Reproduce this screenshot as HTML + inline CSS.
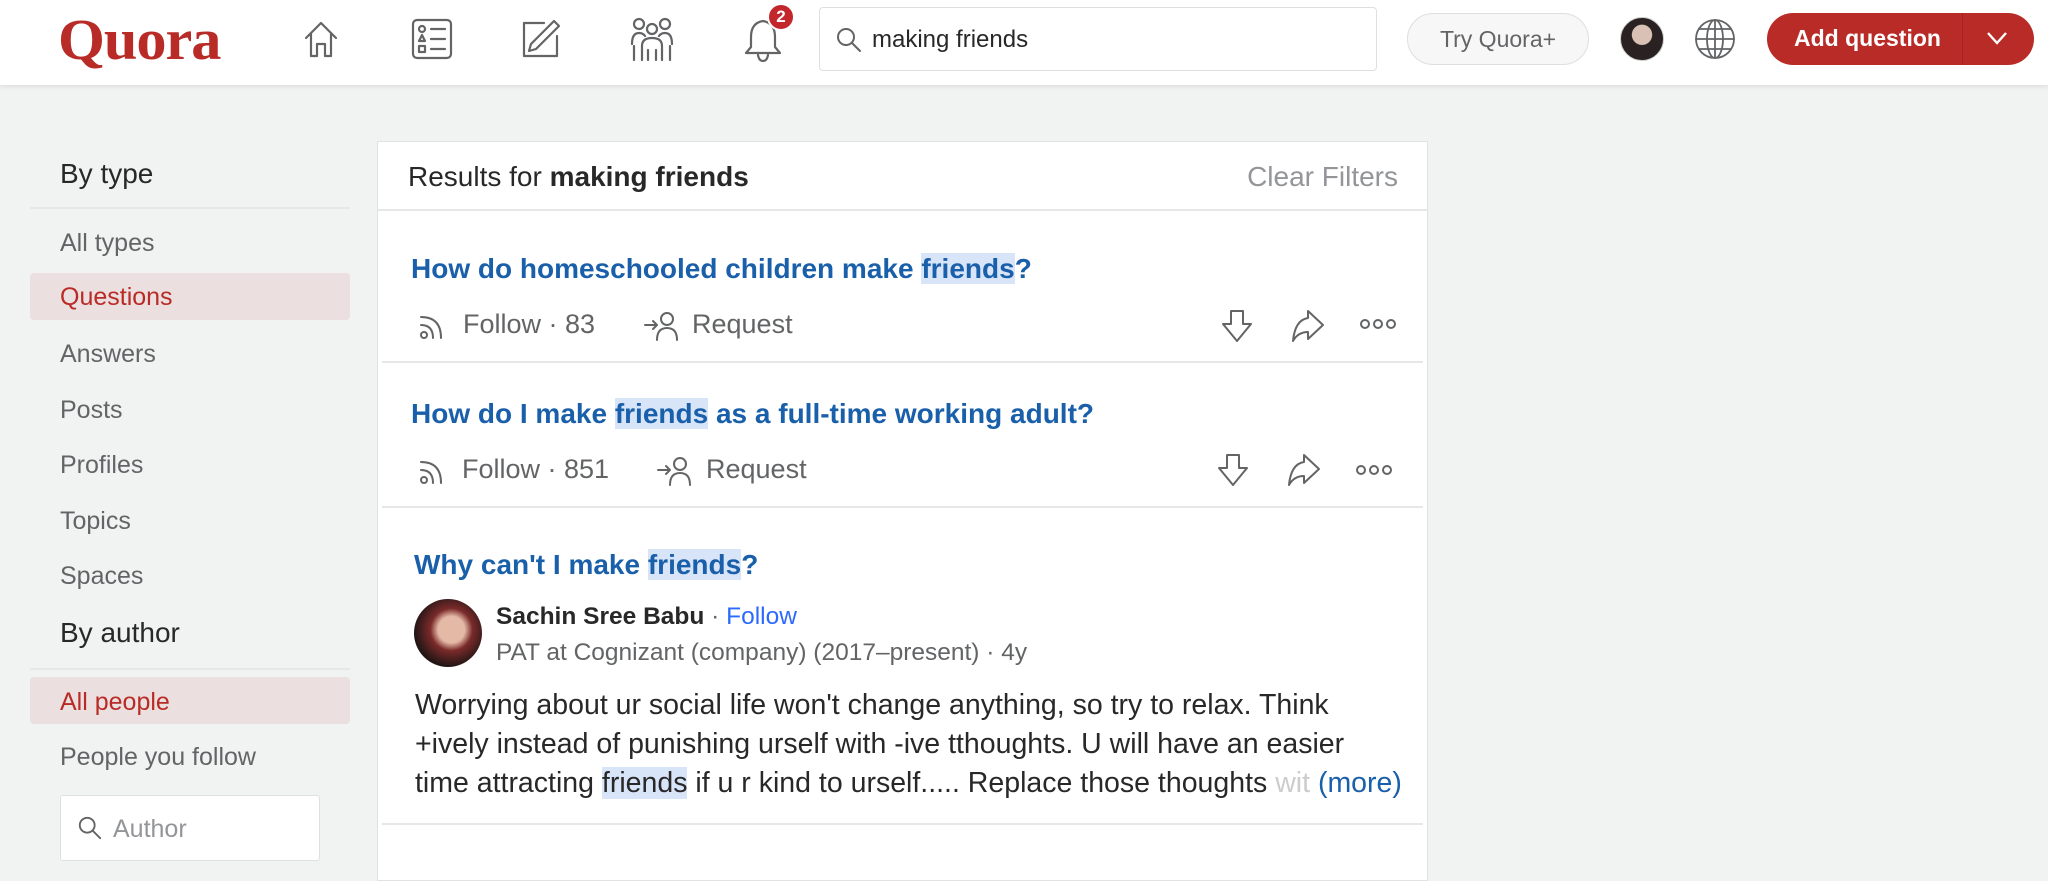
<!DOCTYPE html>
<html><head><meta charset="utf-8"><style>
*{margin:0;padding:0;box-sizing:border-box}
body{width:2048px;height:869px;overflow:hidden;background:#f1f2f2;font-family:"Liberation Sans",sans-serif;position:relative;color:#282829}
.a{position:absolute}
.hdr{left:0;top:0;width:2048px;height:85px;background:#fff;box-shadow:0 2px 4px rgba(0,0,0,.08)}
.logo{left:58px;top:6px;font-family:"Liberation Serif",serif;font-weight:bold;font-size:58px;color:#b92b27;letter-spacing:-1px;transform:scaleX(1.04);transform-origin:left}
.ic{stroke:#636466;fill:none;stroke-width:2.2;stroke-linecap:round;stroke-linejoin:round}
.side{font-size:25px;color:#636466}
.hl{background:#ebdfdf;border-radius:4px}
.card{left:377px;top:141px;width:1051px;height:740px;background:#fff;border:1px solid #e1e2e3}
.qt{font-size:28px;font-weight:bold;color:#195faa}
.mk{background:#d8e4f8}
.meta{font-size:27px;color:#636466}
.div{height:2px;background:#e6e7e8}
</style></head><body>
<div class="a hdr"></div>
<div class="a logo">Quora</div>
<svg class="a ic" style="left:300px;top:18px" width="42" height="42" viewBox="0 0 42 42"><path d="M6 20 L21 5 L36 20 M11 16 V38 H17 V26 H25 V38 H31 V16"/></svg>
<svg class="a ic" style="left:410px;top:17px" width="44" height="44" viewBox="0 0 44 44"><rect x="3" y="3" width="38" height="38" rx="4"/><circle cx="12" cy="12" r="3"/><path d="M12 18 L15 24 H9 Z"/><rect x="9" y="29" width="6" height="6"/><path d="M21 12H35M21 22H35M21 32H35"/></svg>
<svg class="a ic" style="left:520px;top:18px" width="42" height="42" viewBox="0 0 42 42"><path d="M24 5 H4 V38 H37 V18"/><path d="M34 3 L39 8 L16 31 L9 33 L11 26 Z"/></svg>
<svg class="a ic" style="left:630px;top:16px" width="44" height="46" viewBox="0 0 44 46"><circle cx="9" cy="8" r="5"/><circle cx="22" cy="13" r="5"/><circle cx="35" cy="8" r="5"/><path d="M2 28 Q2 17 9 17 Q13 17 15 20 M42 28 Q42 17 35 17 Q31 17 29 20 M12 44 V30 Q12 22 22 22 Q32 22 32 30 V44 M4 44 V30 M40 44 V30 M18 44 V34 M26 44 V34"/></svg>
<svg class="a ic" style="left:742px;top:17px" width="42" height="46" viewBox="0 0 42 46"><path d="M21 4 Q9 6 9 20 V30 L4 36 H38 L33 30 V20 Q33 6 21 4 Z M16 38 Q17 44 21 44 Q25 44 26 38"/></svg>
<div class="a" style="left:767px;top:3px;width:28px;height:28px;border-radius:50%;background:#c3272b;border:2px solid #fff;color:#fff;font-size:17px;font-weight:bold;text-align:center;line-height:24px">2</div>
<div class="a" style="left:819px;top:7px;width:558px;height:64px;border:1px solid #dedfe0;border-radius:4px;background:#fff"></div>
<svg class="a ic" style="left:835px;top:26px;stroke-width:2" width="28" height="28" viewBox="0 0 28 28"><circle cx="11" cy="11" r="8"/><path d="M17 17 L25 25"/></svg>
<div class="a" style="left:872px;top:26px;font-size:24px;color:#282829">making friends</div>
<div class="a" style="left:1407px;top:13px;width:182px;height:52px;border:1px solid #dedfe0;border-radius:26px;background:#f7f7f8;font-size:23px;color:#636466;text-align:center;line-height:50px">Try Quora+</div>
<div class="a" style="left:1620px;top:17px;width:44px;height:44px;border-radius:50%;background:radial-gradient(circle at 50% 40%,#d9c2b5 0 30%,#2a2222 32%);border:1px solid #ccc"></div>
<svg class="a ic" style="left:1693px;top:17px;stroke-width:1.8" width="44" height="44" viewBox="0 0 44 44"><circle cx="22" cy="22" r="19"/><ellipse cx="22" cy="22" rx="8" ry="19"/><path d="M3 22H41M6 12H38M6 32H38M22 3V41"/></svg>
<div class="a" style="left:1767px;top:13px;width:267px;height:52px;border-radius:26px;background:#b92b27"></div>
<div class="a" style="left:1794px;top:25px;font-size:23px;font-weight:bold;color:#fff">Add question</div>
<div class="a" style="left:1962px;top:13px;width:1px;height:52px;background:#a02420"></div>
<svg class="a" style="left:1986px;top:30px" width="22" height="16" viewBox="0 0 22 16"><path d="M2 3 L11 13 L20 3" stroke="#fff" stroke-width="2.4" fill="none"/></svg>

<div class="a" style="left:60px;top:158px;font-size:28px;color:#282829">By type</div>
<div class="a div" style="left:30px;top:207px;width:320px"></div>
<div class="a side" style="left:60px;top:229px">All types</div>
<div class="a hl" style="left:30px;top:273px;width:320px;height:47px"></div>
<div class="a side" style="left:60px;top:283px;color:#b92b27">Questions</div>
<div class="a side" style="left:60px;top:340px">Answers</div>
<div class="a side" style="left:60px;top:396px">Posts</div>
<div class="a side" style="left:60px;top:451px">Profiles</div>
<div class="a side" style="left:60px;top:507px">Topics</div>
<div class="a side" style="left:60px;top:562px">Spaces</div>
<div class="a" style="left:60px;top:617px;font-size:28px;color:#282829">By author</div>
<div class="a div" style="left:30px;top:668px;width:320px"></div>
<div class="a hl" style="left:30px;top:677px;width:320px;height:47px"></div>
<div class="a side" style="left:60px;top:688px;color:#b92b27">All people</div>
<div class="a side" style="left:60px;top:743px">People you follow</div>
<div class="a" style="left:60px;top:795px;width:260px;height:66px;border:1px solid #dedfe0;border-radius:3px;background:#fff"></div>
<svg class="a ic" style="left:77px;top:815px;stroke-width:2" width="26" height="26" viewBox="0 0 28 28"><circle cx="11" cy="11" r="8"/><path d="M17 17 L25 25"/></svg>
<div class="a side" style="left:113px;top:815px;color:#939598">Author</div>

<div class="a card"></div>
<div class="a" style="left:408px;top:161px;font-size:28px;color:#282829">Results for <b>making friends</b></div>
<div class="a" style="right:650px;top:161px;font-size:28px;color:#939598">Clear Filters</div>
<div class="a div" style="left:378px;top:209px;width:1049px"></div>

<div class="a qt" style="left:411px;top:253px">How do homeschooled children make <span class="mk">friends</span>?</div>
<svg class="a ic" style="left:417px;top:311px;stroke-width:2" width="30" height="30" viewBox="0 0 30 30"><circle cx="7" cy="24" r="3"/><path d="M4 14 Q16 14 16 27 M4 6 Q24 6 24 27"/></svg>
<div class="a meta" style="left:463px;top:309px">Follow · 83</div>
<svg class="a ic" style="left:643px;top:309px;stroke-width:2" width="36" height="32" viewBox="0 0 36 32"><path d="M2 16H14M10 12L14 16L10 20"/><circle cx="24" cy="10" r="6"/><path d="M14 31 Q14 19 24 19 Q34 19 34 31"/></svg>
<div class="a meta" style="left:692px;top:309px">Request</div>
<svg class="a ic" style="left:1220px;top:308px;stroke-width:2" width="34" height="36" viewBox="0 0 34 36"><path d="M11 3H23V16H31L17 33L3 16H11Z"/></svg>
<svg class="a ic" style="left:1290px;top:308px;stroke-width:2" width="36" height="36" viewBox="0 0 36 36"><path d="M18 3 L33 17 L18 31 V24 Q8 24 3 33 Q5 12 18 10 Z"/></svg>
<svg class="a ic" style="left:1359px;top:316px;stroke-width:2" width="38" height="16" viewBox="0 0 38 16"><circle cx="6" cy="8" r="4"/><circle cx="19" cy="8" r="4"/><circle cx="32" cy="8" r="4"/></svg>
<div class="a div" style="left:382px;top:361px;width:1041px"></div>

<div class="a qt" style="left:411px;top:398px">How do I make <span class="mk">friends</span> as a full-time working adult?</div>
<svg class="a ic" style="left:417px;top:456px;stroke-width:2" width="30" height="30" viewBox="0 0 30 30"><circle cx="7" cy="24" r="3"/><path d="M4 14 Q16 14 16 27 M4 6 Q24 6 24 27"/></svg>
<div class="a meta" style="left:462px;top:454px">Follow · 851</div>
<svg class="a ic" style="left:656px;top:454px;stroke-width:2" width="36" height="32" viewBox="0 0 36 32"><path d="M2 16H14M10 12L14 16L10 20"/><circle cx="24" cy="10" r="6"/><path d="M14 31 Q14 19 24 19 Q34 19 34 31"/></svg>
<div class="a meta" style="left:706px;top:454px">Request</div>
<svg class="a ic" style="left:1216px;top:452px;stroke-width:2" width="34" height="36" viewBox="0 0 34 36"><path d="M11 3H23V16H31L17 33L3 16H11Z"/></svg>
<svg class="a ic" style="left:1286px;top:452px;stroke-width:2" width="36" height="36" viewBox="0 0 36 36"><path d="M18 3 L33 17 L18 31 V24 Q8 24 3 33 Q5 12 18 10 Z"/></svg>
<svg class="a ic" style="left:1355px;top:462px;stroke-width:2" width="38" height="16" viewBox="0 0 38 16"><circle cx="6" cy="8" r="4"/><circle cx="19" cy="8" r="4"/><circle cx="32" cy="8" r="4"/></svg>
<div class="a div" style="left:382px;top:506px;width:1041px"></div>

<div class="a qt" style="left:414px;top:549px">Why can't I make <span class="mk">friends</span>?</div>
<div class="a" style="left:414px;top:599px;width:68px;height:68px;border-radius:50%;background:radial-gradient(circle at 55% 45%,#e4b9a6 0 25%,#7a2a2a 40%,#221515 70%)"></div>
<div class="a" style="left:496px;top:603px;font-size:24.5px;color:#282829"><b>Sachin Sree Babu</b> <span style="color:#636466">·</span> <span style="color:#2e69ff">Follow</span></div>
<div class="a" style="left:496px;top:639px;font-size:24.5px;color:#636466">PAT at Cognizant (company) (2017–present) · 4y</div>
<div class="a" style="left:415px;top:686px;font-size:28.5px;line-height:39px;color:#282829;width:1030px;white-space:nowrap">Worrying about ur social life won't change anything, so try to relax. Think<br>+ively instead of punishing urself with -ive tthoughts. U will have an easier<br>time attracting <span class="mk">friends</span> if u r kind to urself..... Replace those thoughts <span style="color:#ccc">wit</span> <span style="color:#195faa">(more)</span></div>
<div class="a div" style="left:382px;top:823px;width:1041px"></div>
</body></html>
